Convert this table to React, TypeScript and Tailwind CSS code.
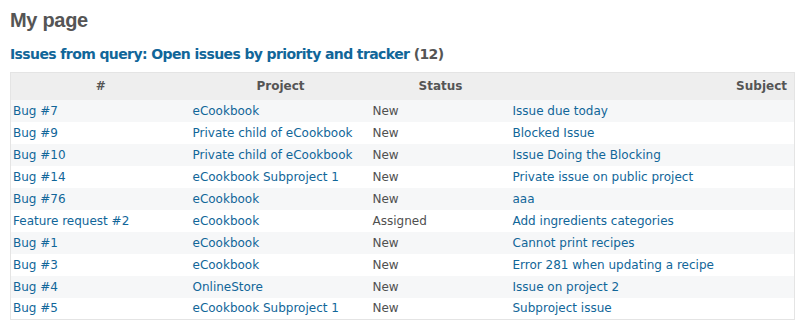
const issues = [
  { id: 'Bug #7', project: 'eCookbook', status: 'New', subject: 'Issue due today' },
  { id: 'Bug #9', project: 'Private child of eCookbook', status: 'New', subject: 'Blocked Issue' },
  { id: 'Bug #10', project: 'Private child of eCookbook', status: 'New', subject: 'Issue Doing the Blocking' },
  { id: 'Bug #14', project: 'eCookbook Subproject 1', status: 'New', subject: 'Private issue on public project' },
  { id: 'Bug #76', project: 'eCookbook', status: 'New', subject: 'aaa' },
  { id: 'Feature request #2', project: 'eCookbook', status: 'Assigned', subject: 'Add ingredients categories' },
  { id: 'Bug #1', project: 'eCookbook', status: 'New', subject: 'Cannot print recipes' },
  { id: 'Bug #3', project: 'eCookbook', status: 'New', subject: 'Error 281 when updating a recipe' },
  { id: 'Bug #4', project: 'OnlineStore', status: 'New', subject: 'Issue on project 2' },
  { id: 'Bug #5', project: 'eCookbook Subproject 1', status: 'New', subject: 'Subproject issue' },
];

export default function App() {
  return (
    <div className="bg-white min-h-[335px] pl-[10px] pt-[6px] font-['DejaVu_Sans',Verdana,sans-serif] text-[12px] text-[#333]">
      <h2 className="font-['Liberation_Sans',Arial,sans-serif] text-[20px] font-bold tracking-[-0.3px] text-[#555] leading-[28px] mb-[10px]">My page</h2>
      <h3 className="text-[14px] font-bold tracking-[-0.6px] text-[#555] leading-[20px] mb-[8px]">
        <a className="text-[#169]">Issues from query: Open issues by priority and tracker</a> (12)
      </h3>
      <table className="w-[785px] table-fixed border-collapse border border-[#e4e4e4]">
        <colgroup>
          <col className="w-[180px]" />
          <col className="w-[180px]" />
          <col className="w-[140px]" />
          <col />
        </colgroup>
        <thead>
          <tr className="bg-[#eee] h-[27px]">
            <th className="text-center font-bold text-[#555] px-1">#</th>
            <th className="text-center font-bold text-[#555] px-1">Project</th>
            <th className="text-center font-bold text-[#555] px-1">Status</th>
            <th className="text-right font-bold text-[#555] pr-[7px]">Subject</th>
          </tr>
        </thead>
        <tbody>
          {issues.map((issue, i) => (
            <tr key={issue.id} className={`h-[22px] ${i % 2 === 0 ? 'bg-[#f6f7f8]' : 'bg-white'}`}>
              <td className="px-[2px] whitespace-nowrap"><a className="text-[#169]">{issue.id}</a></td>
              <td className="px-[2px] whitespace-nowrap"><a className="text-[#169]">{issue.project}</a></td>
              <td className="px-[2px] whitespace-nowrap text-[#505050]">{issue.status}</td>
              <td className="px-[2px] whitespace-nowrap"><a className="text-[#169]">{issue.subject}</a></td>
            </tr>
          ))}
        </tbody>
      </table>
    </div>
  );
}
